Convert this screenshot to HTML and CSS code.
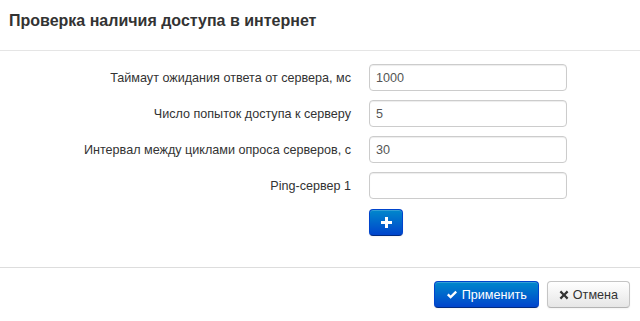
FILE: index.html
```html
<!DOCTYPE html>
<html lang="ru">
<head>
    <meta charset="UTF-8">
    <title>Проверка наличия доступа в интернет</title>
    <link rel="stylesheet" href="styles.css">
</head>
<body>

<div class="modal">
    <div class="modal-header">
        <h3>Проверка наличия доступа в интернет</h3>
    </div>

    <div class="modal-body">
        <div class="row">
            <label for="timeout">Таймаут ожидания ответа от сервера, мс</label>
            <input type="text" id="timeout" value="1000">
        </div>
        <div class="row">
            <label for="tries">Число попыток доступа к серверу</label>
            <input type="text" id="tries" value="5">
        </div>
        <div class="row">
            <label for="interval">Интервал между циклами опроса серверов, с</label>
            <input type="text" id="interval" value="30">
        </div>
        <div class="row">
            <label for="ping1">Ping-сервер 1</label>
            <input type="text" id="ping1" value="">
        </div>
        <div class="row row-add">
            <span class="label-spacer"></span>
            <button class="btn btn-primary btn-add">
                <svg width="11" height="11" viewBox="0 0 11 11"><path d="M4 0h3v4h4v3H7v4H4V7H0V4h4z" fill="#fff"/></svg>
            </button>
        </div>
    </div>

    <div class="modal-footer">
        <button class="btn btn-primary">
            <svg width="12" height="10" viewBox="0 0 12 10"><path d="M1 5.2 2.6 3.6 4.6 5.6 9.4 0.8 11 2.4 4.6 8.8z" fill="#fff"/></svg>
            Применить
        </button>
        <button class="btn">
            <svg width="10" height="10" viewBox="0 0 10 10"><path d="M2.2 0.6 5 3.4 7.8 0.6 9.4 2.2 6.6 5 9.4 7.8 7.8 9.4 5 6.6 2.2 9.4 0.6 7.8 3.4 5 0.6 2.2z" fill="#333"/></svg>
            Отмена
        </button>
    </div>
</div>

</body>
</html>
```

FILE: styles.css
```css
body {
    margin: 0;
    font-family: "Liberation Sans", Arial, sans-serif;
    font-size: 12.6px;
    color: #333;
    background-color: #fff;
}
.modal {
    width: 640px;
}
.modal-header {
    height: 51px;
    padding: 0 9px;
    border-bottom: 1px solid #e5e5e5;
    display: flex;
    align-items: center;
    box-sizing: border-box;
}
.modal-header h3 {
    margin: 0 0 8px;
    font-size: 16px;
    font-weight: bold;
    color: #333;
}
.modal-body {
    padding: 13px 0 31px;
}
.row {
    display: flex;
    align-items: center;
    gap: 18px;
    margin-bottom: 9px;
}
.row-add {
    margin-top: 10px;
    margin-bottom: 0;
}
.row label,
.label-spacer {
    width: 351px;
    text-align: right;
    flex-shrink: 0;
}
input {
    width: 198px;
    height: 27px;
    box-sizing: border-box;
    padding: 4px 6px;
    border: 1px solid #ccc;
    border-radius: 4px;
    font-family: "Liberation Sans", Arial, sans-serif;
    font-size: 12.6px;
    color: #555;
    box-shadow: inset 0 1px 1px rgba(0, 0, 0, 0.075);
}
.btn {
    display: inline-flex;
    align-items: center;
    gap: 4px;
    height: 27px;
    padding: 0 11px;
    box-sizing: border-box;
    font-family: "Liberation Sans", Arial, sans-serif;
    font-size: 12.6px;
    color: #333;
    border: 1px solid #c5c5c5;
    border-bottom-color: #b3b3b3;
    border-radius: 4px;
    background-image: linear-gradient(to bottom, #ffffff, #e6e6e6);
    box-shadow: inset 0 1px 0 rgba(255, 255, 255, 0.2), 0 1px 2px rgba(0, 0, 0, 0.05);
    cursor: pointer;
}
.btn-primary {
    color: #fff;
    border-color: #0044cc #0044cc #002a80;
    background-image: linear-gradient(to bottom, #0088cc, #0044cc);
}
.btn-add {
    width: 34px;
    justify-content: center;
    padding: 0;
}
.modal-footer {
    border-top: 1px solid #ddd;
    padding: 13px 10px 13px 0;
    display: flex;
    justify-content: flex-end;
    gap: 8px;
}
```
